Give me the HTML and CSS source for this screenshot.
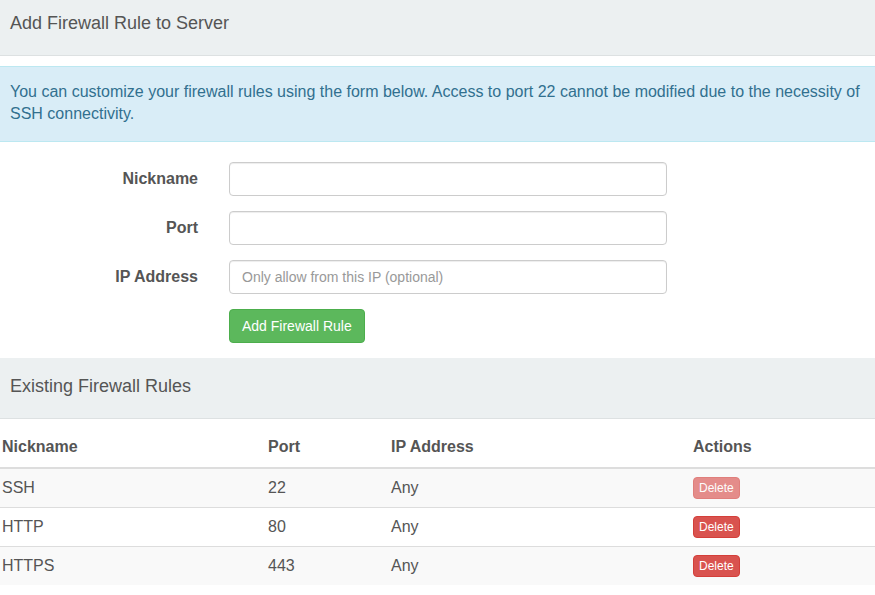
FILE: index.html
```html
<!DOCTYPE html>
<html>
<head>
<meta charset="utf-8">
<link rel="stylesheet" href="styles.css">
</head>
<body>
<div class="panel">
  <div class="panel-heading first">Add Firewall Rule to Server</div>
  <div class="alert">You can customize your firewall rules using the form below. Access to port 22 cannot be modified due to the necessity of SSH connectivity.</div>
  <form class="form">
    <div class="form-group">
      <label class="label">Nickname</label>
      <input class="input" type="text">
    </div>
    <div class="form-group">
      <label class="label">Port</label>
      <input class="input" type="text">
    </div>
    <div class="form-group">
      <label class="label">IP Address</label>
      <input class="input" type="text" placeholder="Only allow from this IP (optional)">
    </div>
    <div class="form-group">
      <span class="label"></span>
      <div><button type="button" class="btn btn-success">Add Firewall Rule</button></div>
    </div>
  </form>
</div>
<div class="panel">
  <div class="panel-heading">Existing Firewall Rules</div>
  <table class="table">
    <colgroup>
      <col class="c1"><col class="c2"><col class="c3"><col class="c4">
    </colgroup>
    <thead>
      <tr><th>Nickname</th><th>Port</th><th>IP Address</th><th>Actions</th></tr>
    </thead>
    <tbody>
      <tr><td>SSH</td><td>22</td><td>Any</td><td><button type="button" class="btn btn-xs btn-danger disabled">Delete</button></td></tr>
      <tr><td>HTTP</td><td>80</td><td>Any</td><td><button type="button" class="btn btn-xs btn-danger">Delete</button></td></tr>
      <tr><td>HTTPS</td><td>443</td><td>Any</td><td><button type="button" class="btn btn-xs btn-danger">Delete</button></td></tr>
    </tbody>
  </table>
</div>
</body>
</html>
```
FILE: styles.css
```css
* { box-sizing: border-box; }
html, body {
  margin: 0;
  padding: 0;
  background: #fff;
  font-family: "Liberation Sans", Arial, Helvetica, sans-serif;
  color: #555;
  font-size: 16px;
}
.panel-heading {
  background: #ecf0f1;
  border-bottom: 1px solid #dde1e2;
  padding: 18px 10px 22px;
  font-size: 18px;
  line-height: 20px;
  color: #555;
}
.panel-heading.first {
  padding-top: 13px;
}
.alert {
  margin-top: 10px;
  background: #d9edf7;
  border-top: 1px solid #bce8f1;
  border-bottom: 1px solid #bce8f1;
  color: #31708f;
  font-size: 16px;
  line-height: 22px;
  padding: 14px 10px 16px;
}
.form {
  padding-top: 20px;
  margin: 0;
}
.form-group {
  display: grid;
  grid-template-columns: 198px 438px;
  column-gap: 31px;
  align-items: center;
  margin-bottom: 15px;
}
.label {
  text-align: right;
  font-weight: bold;
  font-size: 16px;
  color: #555;
}
.input {
  display: block;
  height: 34px;
  width: 438px;
  border: 1px solid #ccc;
  border-radius: 4px;
  padding: 6px 12px;
  font-family: inherit;
  font-size: 14px;
  color: #555;
  background: #fff;
  box-shadow: inset 0 1px 1px rgba(0,0,0,.075);
}
.input::placeholder { color: #999; }
.btn {
  font-family: inherit;
  display: inline-block;
  border: 1px solid transparent;
  border-radius: 4px;
  color: #fff;
  cursor: pointer;
  vertical-align: top;
}
.btn-success {
  background: #5cb85c;
  border-color: #4cae4c;
  height: 34px;
  padding: 6px 12px;
  font-size: 14px;
  line-height: 20px;
}
.btn-danger {
  background: #d9534f;
  border-color: #d43f3a;
}
.btn-xs {
  display: block;
  height: 22px;
  padding: 1px 5px;
  font-size: 12px;
  line-height: 18px;
}
.btn.disabled { opacity: .65; }
.table {
  margin-top: 9px;
  width: 875px;
  border-collapse: collapse;
  table-layout: fixed;
}
.c1 { width: 266px; }
.c2 { width: 123px; }
.c3 { width: 302px; }
.table th, .table td {
  text-align: left;
  padding: 8px 2px;
  line-height: 22px;
  font-size: 16px;
  vertical-align: top;
}
.table th {
  font-weight: bold;
  padding-bottom: 9px;
  border-bottom: 2px solid #ddd;
}
.table td { border-top: 1px solid #ddd; }
.table tbody tr:first-child td { border-top: 0; }
.table tbody tr:nth-child(odd) { background: #f9f9f9; }
```
